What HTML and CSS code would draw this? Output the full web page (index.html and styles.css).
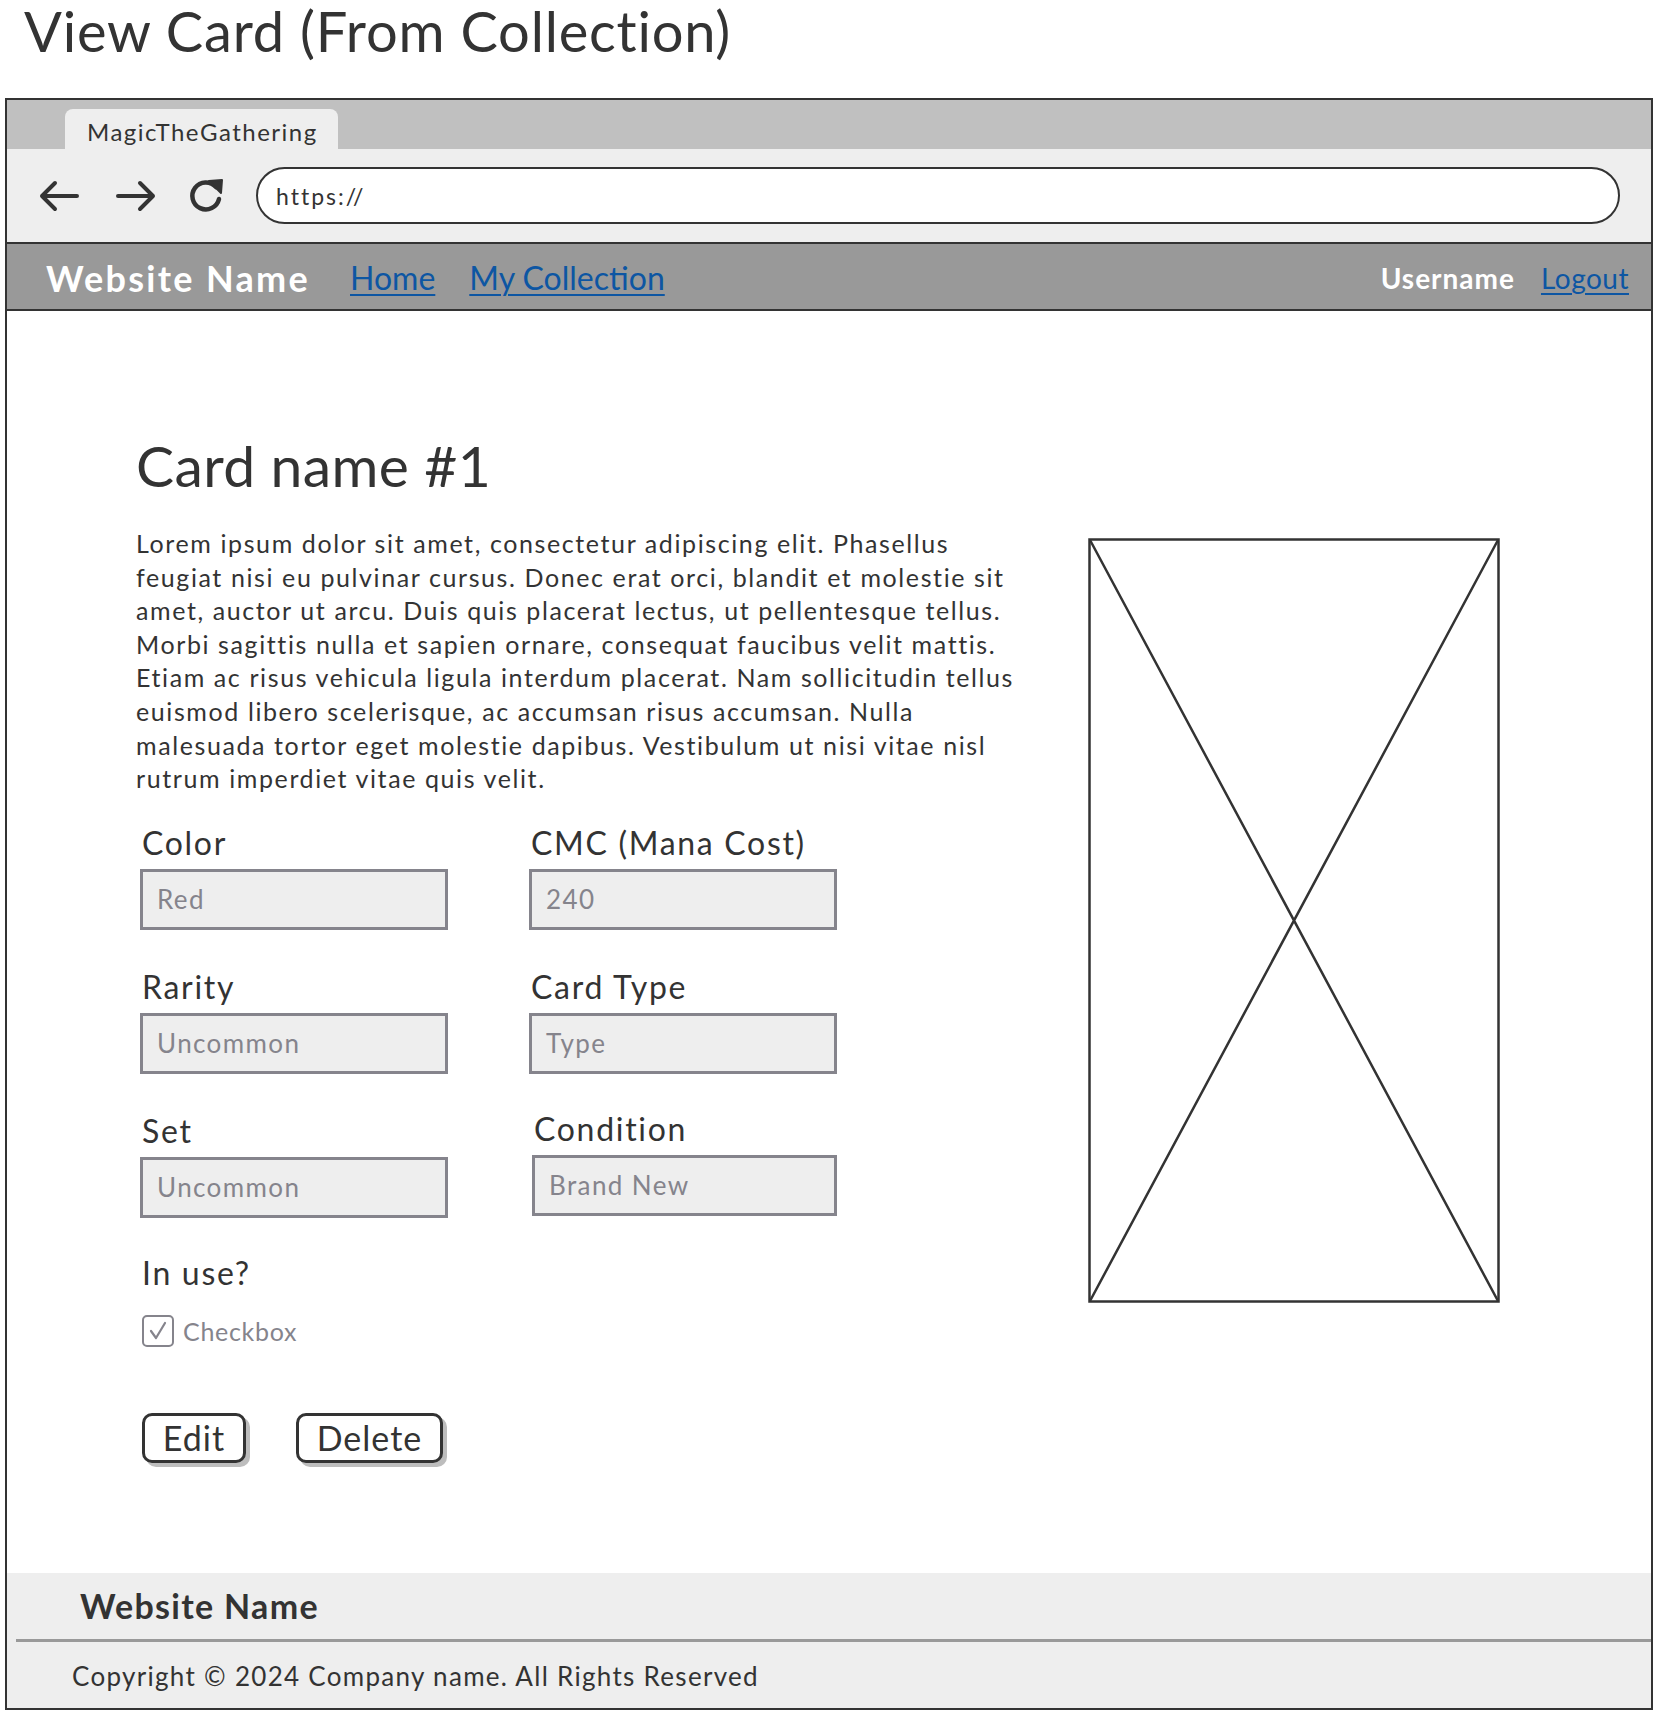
FILE: index.html
```html
<!DOCTYPE html>
<html>
<head>
<meta charset="utf-8">
<title>View Card (From Collection)</title>
<link rel="stylesheet" href="styles.css">
</head>
<body>
<h1 class="page-title">View Card (From Collection)</h1>
<div class="window">
  <div class="tabbar">
    <div class="tab">MagicTheGathering</div>
  </div>
  <div class="toolbar">
    <svg class="tb-icon" width="42" height="34" viewBox="0 0 42 34"><path d="M39 17H4M17 4L4 17L17 30" fill="none" stroke="#333" stroke-width="4" stroke-linecap="round" stroke-linejoin="round"/></svg>
    <svg class="tb-icon fwd" width="42" height="34" viewBox="0 0 42 34"><path d="M3 17H38M25 4L38 17L25 30" fill="none" stroke="#333" stroke-width="4" stroke-linecap="round" stroke-linejoin="round"/></svg>
    <svg class="tb-icon reload" width="38" height="38" viewBox="0 0 38 38"><path d="M29 10A13.5 13.5 0 1 0 32 22" fill="none" stroke="#333" stroke-width="4.5" stroke-linecap="round"/><path d="M22 4L35 3L34 16Z" fill="#333" stroke="#333" stroke-width="2" stroke-linejoin="round"/></svg>
    <div class="url">https://</div>
  </div>
  <div class="navbar">
    <span class="brand">Website Name</span>
    <a class="nav-link" href="#">Home</a>
    <a class="nav-link" href="#">My Collection</a>
    <span class="spacer"></span>
    <span class="user">Username</span>
    <a class="nav-link logout" href="#">Logout</a>
  </div>
  <div class="main">
    <div class="content">
      <h2 class="card-title">Card name #1</h2>
      <p class="desc">Lorem ipsum dolor sit amet, consectetur adipiscing elit. Phasellus<br>feugiat nisi eu pulvinar cursus. Donec erat orci, blandit et molestie sit<br>amet, auctor ut arcu. Duis quis placerat lectus, ut pellentesque tellus.<br>Morbi sagittis nulla et sapien ornare, consequat faucibus velit mattis.<br>Etiam ac risus vehicula ligula interdum placerat. Nam sollicitudin tellus<br>euismod libero scelerisque, ac accumsan risus accumsan. Nulla<br>malesuada tortor eget molestie dapibus. Vestibulum ut nisi vitae nisl<br>rutrum imperdiet vitae quis velit.</p>
      <div class="fields">
        <div class="field"><div class="label">Color</div><div class="input">Red</div></div>
        <div class="field"><div class="label">CMC (Mana Cost)</div><div class="input">240</div></div>
        <div class="field"><div class="label">Rarity</div><div class="input">Uncommon</div></div>
        <div class="field"><div class="label">Card Type</div><div class="input">Type</div></div>
        <div class="field"><div class="label">Set</div><div class="input">Uncommon</div></div>
        <div class="field shift"><div class="label">Condition</div><div class="input">Brand New</div></div>
      </div>
      <div class="label inuse">In use?</div>
      <div class="check-row">
        <span class="checkbox"><svg width="22" height="22" viewBox="0 0 22 22"><path d="M4 11L9 18L18 3" fill="none" stroke="#85848c" stroke-width="2.2" stroke-linecap="round" stroke-linejoin="round"/></svg></span>
        <span class="check-label">Checkbox</span>
      </div>
      <div class="buttons">
        <button class="btn btn-edit">Edit</button>
        <button class="btn btn-delete">Delete</button>
      </div>
    </div>
    <div class="image-ph">
      <svg width="412" height="765" viewBox="0 0 412 765" preserveAspectRatio="none">
        <rect x="1.5" y="1.5" width="409" height="762" fill="none" stroke="#333" stroke-width="2.5"/>
        <path d="M2 2L410 763M410 2L2 763" stroke="#333" stroke-width="2.5" fill="none"/>
      </svg>
    </div>
  </div>
  <div class="footer">
    <div class="footer-name">Website Name</div>
    <div class="footer-divider"></div>
    <div class="copyright">Copyright © 2024 Company name. All Rights Reserved</div>
  </div>
</div>
</body>
</html>
```
FILE: styles.css
```css
* { box-sizing: border-box; }
body {
  margin: 0;
  font-family: "Lato", "Open Sans", sans-serif;
  color: #333;
  background: #fff;
}
.page-title {
  margin: 0;
  padding: 0 0 0 24px;
  font-size: 56px;
  line-height: 62px;
  font-weight: 400;
  letter-spacing: 0.8px;
  color: #333;
}
.window {
  margin: 36px 0 0 5px;
  width: 1648px;
  border: 2px solid #333;
}
.tabbar {
  background: #c0c0c0;
  height: 49px;
  padding: 9px 0 0 58px;
}
.tab {
  width: 273px;
  height: 40px;
  background: #eeeeee;
  border-radius: 8px 8px 0 0;
  padding: 3px 0 0 22px;
  font-size: 24px;
  line-height: 40px;
  letter-spacing: 1.5px;
}
.toolbar {
  background: #eeeeee;
  height: 93px;
  display: flex;
  align-items: center;
  padding-left: 31px;
}
.tb-icon { display: block; flex: none; }
.tb-icon.fwd { margin-left: 35px; }
.tb-icon.reload { margin-left: 30px; }
.url {
  margin-left: 31px;
  width: 1364px;
  height: 57px;
  border: 2.5px solid #333;
  border-radius: 29px;
  background: #fff;
  font-size: 23px;
  line-height: 54px;
  padding-left: 18px;
  letter-spacing: 2px;
}
.navbar {
  background: #999999;
  border-top: 2px solid #333;
  border-bottom: 2px solid #333;
  height: 69px;
  display: flex;
  align-items: center;
  padding: 2px 22px 0 39px;
}
.brand {
  color: #fff;
  font-size: 36px;
  font-weight: 700;
  letter-spacing: 2.3px;
  margin-right: 40px;
}
.nav-link {
  color: #0d56a3;
  font-size: 32px;
  text-decoration: underline;
  text-decoration-thickness: 2px;
  text-underline-offset: 4px;
  margin-right: 34px;
}
.spacer { flex: 1; }
.user {
  color: #fff;
  font-size: 28px;
  font-weight: 700;
  letter-spacing: 1px;
  margin-right: 26px;
}
.nav-link.logout { font-size: 28px; margin-right: 0; letter-spacing: 0.5px; }
.main {
  display: grid;
  grid-template-columns: 952px 412px;
  padding: 126px 0 110px 129px;
}
.card-title {
  margin: 0;
  font-size: 57px;
  line-height: 57px;
  font-weight: 400;
  letter-spacing: 0.4px;
}
.desc {
  margin: 33px 0 0 0;
  font-size: 25px;
  line-height: 33.6px;
  letter-spacing: 1.6px;
  white-space: nowrap;
}
.fields {
  margin: 28px 0 0 4px;
  display: grid;
  grid-template-columns: 308px 308px;
  column-gap: 81px;
  row-gap: 38px;
  width: 700px;
}
.field.shift { margin-left: 3px; margin-top: -2px; }
.label {
  font-size: 32px;
  line-height: 38px;
  padding-left: 2px;
  letter-spacing: 1.7px;
}
.input {
  margin-top: 7px;
  height: 61px;
  background: #eeeeee;
  border: 3px solid #85848c;
  color: #85848c;
  font-size: 26px;
  line-height: 55px;
  padding-left: 14px;
  letter-spacing: 1.4px;
}
.label.inuse { margin: 36px 0 0 4px; }
.check-row {
  margin: 23px 0 0 6px;
  display: flex;
  align-items: center;
}
.checkbox {
  width: 32px;
  height: 32px;
  border: 2.5px solid #85848c;
  border-radius: 5px;
  display: flex;
  align-items: center;
  justify-content: center;
}
.checkbox svg { display: block; }
.check-label {
  margin-left: 9px;
  font-size: 25px;
  color: #85848c;
  letter-spacing: 0.7px;
}
.buttons {
  margin: 66px 0 0 6px;
  display: flex;
  gap: 50px;
}
.btn {
  height: 50px;
  border: 3px solid #333;
  border-radius: 10px;
  background: #fff;
  box-shadow: 4px 4px 0 #bdbdbd;
  font-family: "Lato", "Open Sans", sans-serif;
  font-size: 34px;
  line-height: 40px;
  letter-spacing: 1px;
  color: #333;
  padding: 0;
}
.btn-edit { width: 104px; }
.btn-delete { width: 147px; }
.image-ph {
  margin-top: 101px;
  width: 412px;
  height: 765px;
  align-self: start;
}
.image-ph svg { display: block; }
.footer {
  background: #eeeeee;
}
.footer-name {
  height: 66px;
  line-height: 66px;
  padding-left: 73px;
  font-size: 34px;
  font-weight: 700;
  letter-spacing: 1.3px;
}
.footer-divider {
  margin-left: 9px;
  height: 3px;
  background: #999;
}
.copyright {
  height: 66px;
  line-height: 68px;
  padding-left: 65px;
  font-size: 26px;
  letter-spacing: 1.3px;
}
```
